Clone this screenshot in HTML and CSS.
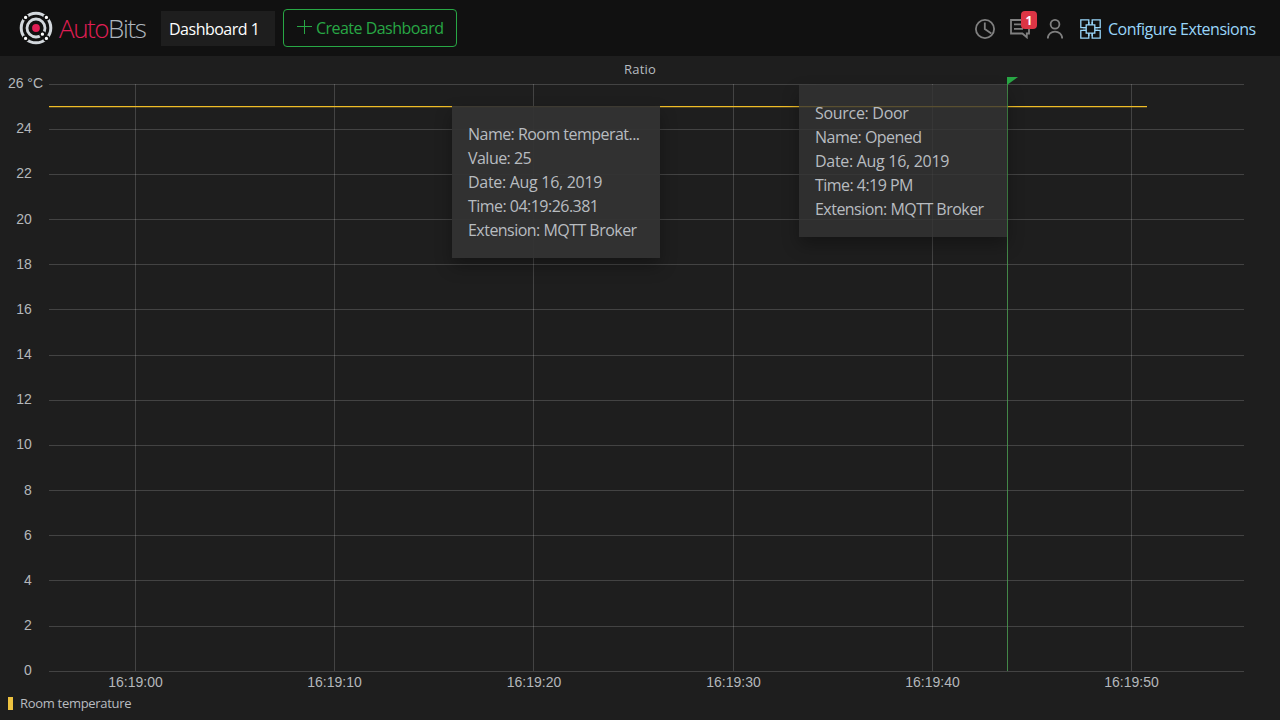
FILE: index.html
```html
<!DOCTYPE html>
<html lang="en">
<head>
<meta charset="utf-8">
<title>AutoBits</title>
<link rel="stylesheet" href="styles.css">
</head>
<body>
<header class="navbar">
  <a class="brand">
    <svg class="brand-logo" width="34" height="34" viewBox="0 0 34 34">
      <g fill="none" stroke="#d3d8dd">
        <circle cx="17" cy="17" r="14.8" stroke-width="3"/>
        <circle cx="17" cy="17" r="9" stroke-width="2.8"/>
      </g>
      <circle cx="17" cy="17" r="3.9" fill="#e01e55"/>
      <g fill="#fff" stroke="#111" stroke-width="1.5">
        <circle cx="6.6" cy="6.4" r="2.4"/><circle cx="27.4" cy="6.4" r="2.4"/>
        <circle cx="6.6" cy="27.4" r="2.4"/><circle cx="27.4" cy="27.4" r="2.4"/>
        <circle cx="23.4" cy="23.2" r="2.4"/>
      </g>
    </svg>
    <span class="brand-name"><span class="brand-auto">Auto</span><span class="brand-bits">Bits</span></span>
  </a>
  <a class="tab"><span>Dashboard 1</span></a>
  <button class="create">
    <svg width="16" height="16" viewBox="0 0 16 16" stroke="#28a745"><path d="M8.5 1v14M1 7.5h15"/></svg>
    <span>Create Dashboard</span>
  </button>
  <nav class="actions">
    <svg class="icon clock" width="20" height="20" viewBox="0 0 20 20"><circle cx="10" cy="10" r="9.1"/><path d="M9.8 3.5v6.5l6.5 4.6"/></svg>
    <div class="messages">
      <svg class="icon" width="20" height="20" viewBox="0 0 20 20"><path d="M1 1h18v13.5h-2.2v3.8l-4.4-3.8H1zM4 5.3h12M4 9.8h9"/></svg>
      <span class="badge">1</span>
    </div>
    <svg class="icon user" width="16" height="20" viewBox="0 0 16 20"><circle cx="8" cy="5.3" r="4.4"/><path d="M.8 19.5c0-9.2 14.4-9.2 14.4 0"/></svg>
    <a class="configure">
      <svg width="21" height="20" viewBox="0 0 21 20"><path d="M.8 .8h8v7.8h-8zM12.2 .8h8v7.8h-8zM.8 11.4h8v7.8h-8zM12.2 11.4h8v7.8h-8z"/><path class="core" d="M6.2 5.8h8.6v8.4H6.2z"/><path d="M8.8 3v3M12.2 3v3M8.8 14v3M12.2 14v3M3 8.6h3M3 11.4h3M15 8.6h3M15 11.4h3"/></svg>
      <span>Configure Extensions</span>
    </a>
  </nav>
</header>
<main class="panel">
  <h1 class="title">Ratio</h1>
  <svg class="chart" width="1280" height="618" viewBox="0 76 1280 618">
    <path class="grid" d="M49 84.5H1244M49 129.5H1244M49 174.5H1244M49 219.5H1244M49 264.5H1244M49 309.5H1244M49 355.5H1244M49 400.5H1244M49 445.5H1244M49 490.5H1244M49 535.5H1244M49 580.5H1244M49 626.5H1244M49 671.5H1244"/>
    <path class="grid" d="M135.5 84V671M334.5 84V671M533.5 84V671M733.5 84V671M932.5 84V671M1131.5 84V671"/>
    <path class="series" d="M49 106.6H1147"/>
    <path class="event" d="M1007.5 77V671"/>
    <path class="flag" d="M1007 77h11l-11 8z"/>
    <g class="axis y-axis">
      <text x="25.5" y="88">26 °C</text><text x="24" y="133">24</text><text x="24" y="178">22</text><text x="24" y="224">20</text><text x="24" y="269">18</text><text x="24" y="314">16</text><text x="24" y="359">14</text><text x="24" y="404">12</text><text x="24" y="449">10</text><text x="28" y="495">8</text><text x="28" y="540">6</text><text x="28" y="585">4</text><text x="28" y="630">2</text><text x="28" y="675">0</text>
    </g>
    <g class="axis">
      <text x="135.5" y="687">16:19:00</text><text x="334.5" y="687">16:19:10</text><text x="534" y="687">16:19:20</text><text x="733.5" y="687">16:19:30</text><text x="932.5" y="687">16:19:40</text><text x="1131.5" y="687">16:19:50</text>
    </g>
  </svg>
  <div class="legend"><i class="swatch"></i><span>Room temperature</span></div>
  <div class="tooltip value-tip">
    <div>Name: Room temperat...</div><div>Value: 25</div><div class="date">Date: Aug 16, 2019</div><div>Time: 04:19:26.381</div><div>Extension: MQTT Broker</div>
  </div>
  <div class="tooltip event-tip">
    <div class="date">Source: Door</div><div>Name: Opened</div><div class="date">Date: Aug 16, 2019</div><div>Time: 4:19 PM</div><div>Extension: MQTT Broker</div>
  </div>
</main>
</body>
</html>
```
FILE: styles.css
```css
* { box-sizing: border-box; }
body { margin: 0; width: 1280px; height: 720px; overflow: hidden; background: #1e1e1e; color: #b8bcc0; font: 16px/24px "Open Sans", "Noto Sans", sans-serif; }
.navbar { display: flex; align-items: center; height: 56px; padding: 0 24px 0 19px; background: #111; }
.brand { display: flex; align-items: center; height: 56px; width: 142px; }
.brand-logo { margin-right: 6px; flex: none; }
.brand-name { flex: none; font-size: 26px; font-weight: 300; line-height: 40px; letter-spacing: -1.45px; white-space: nowrap; }
.brand-auto { color: #e01e55; }
.brand-bits { color: #adb5bd; }
.tab { width: 114px; height: 35px; padding: 6px 8px 5px; margin-right: 8px; background: #1e1e1e; color: #fff; letter-spacing: -0.5px; white-space: nowrap; }
.create { display: flex; align-items: center; width: 174px; height: 38px; padding: 0 12px; gap: 4px; border: 1px solid #28a745; border-radius: 4px; background: transparent; color: #28a745; font: inherit; letter-spacing: -0.53px; white-space: nowrap; }
.create svg { flex: none; margin-top: -3px; }
.actions { display: flex; align-items: center; margin-left: auto; }
.icon { display: block; fill: none; stroke: #808080; stroke-width: 1.8; }
.clock { margin-right: 15px; }
.messages { position: relative; margin-right: 17px; }
.badge { position: absolute; left: 11px; top: -8px; width: 16px; height: 18px; border-radius: 4px; background: #dc3545; color: #fff; font-size: 12px; font-weight: 700; line-height: 19px; text-align: center; }
.user { margin-right: 17px; }
.configure { display: flex; align-items: center; gap: 7px; color: #99d6fa; letter-spacing: -0.5px; white-space: nowrap; }
.actions { padding-top: 1px; }
.configure span { width: 148px; padding-top: 1px; }
.configure svg { fill: none; stroke: #99d6fa; stroke-width: 1.3; }
.configure .core { fill: #111; }
.panel { position: relative; height: 664px; }
.title { height: 20px; margin: 0; padding-top: 3px; font-size: 13px; font-weight: 400; line-height: 20px; letter-spacing: .2px; text-align: center; }
.chart { display: block; }
.grid { fill: none; stroke: #fff; stroke-opacity: .17; }
.series { stroke: #f0bd27; stroke-width: 1.3; }
.event { stroke: #4a9a50; stroke-opacity: .85; }
.flag { fill: #28a745; }
.axis { font: 14px "Liberation Sans", sans-serif; fill: #b4b7ba; text-anchor: middle; }
.legend { display: flex; align-items: center; gap: 7px; height: 18px; padding-left: 8px; font-size: 13px; line-height: 18px; letter-spacing: -0.3px; }
.swatch { width: 5px; height: 13px; background: #edc240; }
.tooltip { position: absolute; width: 208px; height: 152px; padding: 16px; background: rgba(51, 51, 51, .95); box-shadow: 0 8px 16px rgba(0, 0, 0, .3); letter-spacing: -0.53px; white-space: nowrap; }
.tooltip .date { letter-spacing: -0.3px; }
.value-tip { left: 452px; top: 50px; }
.event-tip { left: 799px; top: 29px; background: rgba(51, 51, 51, .8); }
```
